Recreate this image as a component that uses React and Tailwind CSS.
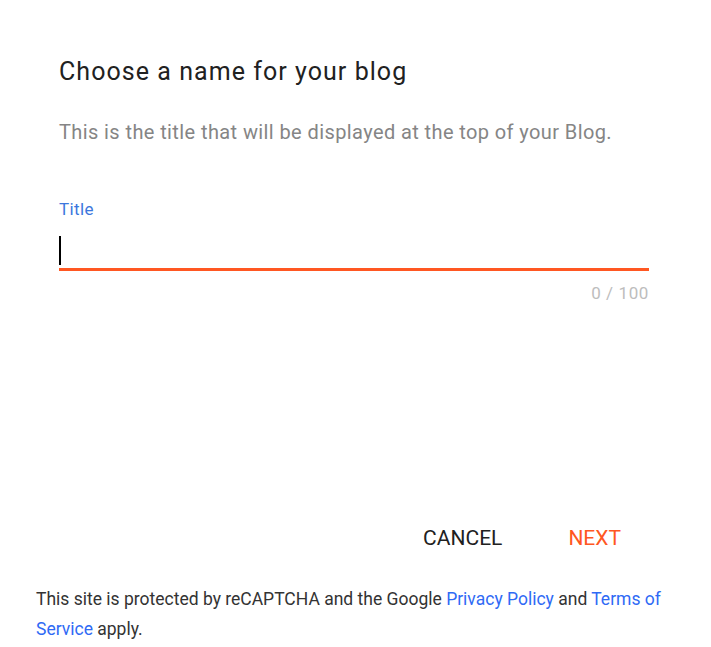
import React, { useState } from 'react'

const App = () => {
  const [title, setTitle] = useState('')

  return (
    <div className="w-[711px] h-[647px] bg-white font-['Roboto',sans-serif] flex flex-col">
      {/* Form */}
      <div className="pl-[59px] pr-[62px] pt-[57px]">
        <h1 className="text-[25px] leading-[30px] text-[#212121] tracking-[1.05px]">
          Choose a name for your blog
        </h1>
        <p className="mt-[32px] text-[20px] leading-[26px] text-[#858585] tracking-[0.4px]">
          This is the title that will be displayed at the top of your Blog.
        </p>

        <label className="block mt-[53px] text-[17px] leading-[22px] text-[#3c77dd] tracking-[0.4px]">
          Title
        </label>
        <div className="mt-[13px] relative">
          <input
            value={title}
            onChange={(e) => setTitle(e.target.value)}
            maxLength={100}
            className="w-full h-[38px] text-[20px] text-[#212121] outline-none border-b-[3px] border-[#ff5722] bg-transparent"
          />
          <span className="absolute left-0 top-[3px] w-[2px] h-[29px] bg-black" />
        </div>
        <div className="mt-[12px] text-right text-[17px] leading-[20px] text-[#bdbdbd] tracking-[0.6px]">
          {title.length} / 100
        </div>
      </div>

      {/* Actions */}
      <div className="mt-auto flex justify-end pr-[90px] gap-[66px]">
        <button className="text-[21px] leading-[28px] text-[#212121]">
          CANCEL
        </button>
        <button className="text-[21px] leading-[28px] text-[#ff5722]">
          NEXT
        </button>
      </div>

      {/* Footer */}
      <p className="mt-[32px] mb-[3px] pl-[36px] pr-[40px] text-[17.5px] leading-[30px] text-[#333333]">
        This site is protected by reCAPTCHA and the Google{' '}
        <a className="text-[#2f6af5]" href="#">Privacy Policy</a> and{' '}
        <a className="text-[#2f6af5]" href="#">Terms of Service</a> apply.
      </p>
    </div>
  )
}

export default App
